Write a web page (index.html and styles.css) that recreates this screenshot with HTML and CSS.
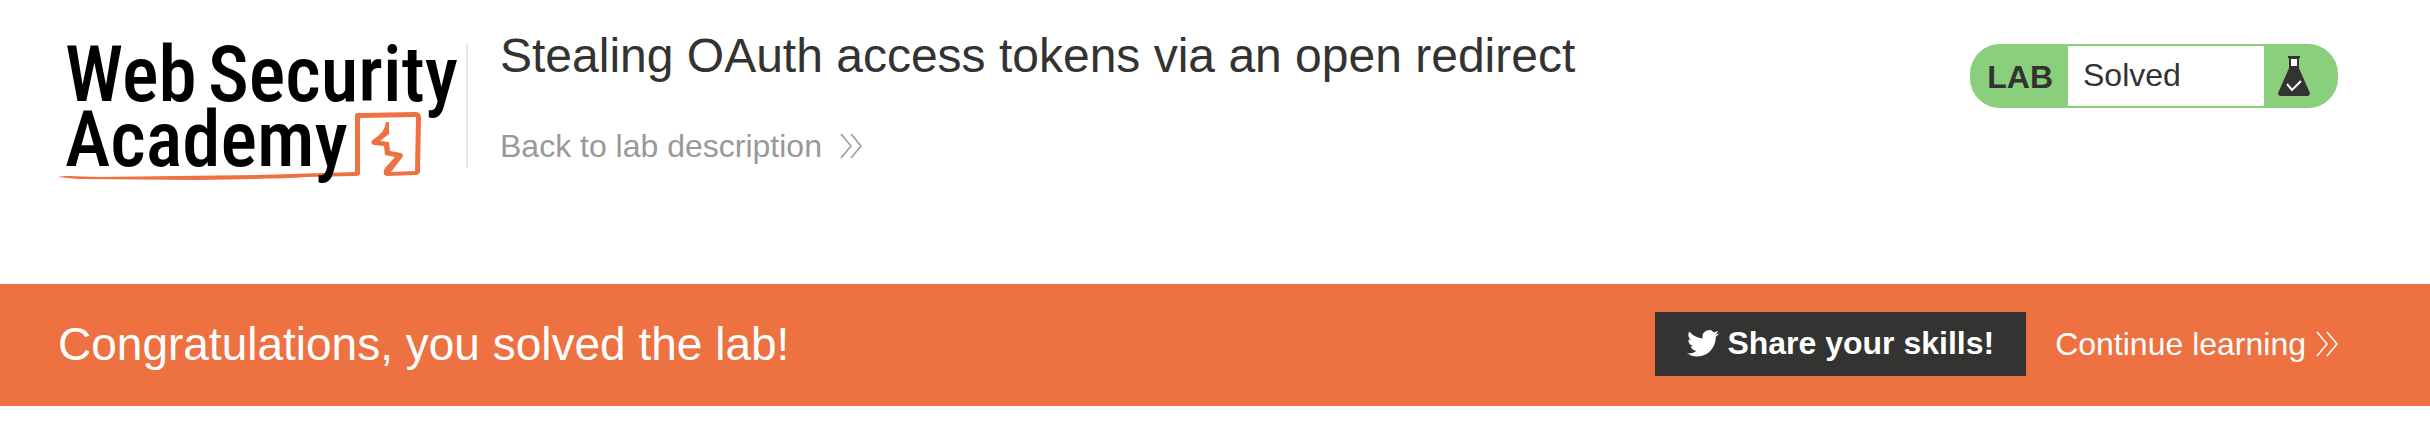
FILE: index.html
```
<!DOCTYPE html>
<html lang="en">
<head>
<meta charset="utf-8">
<title>Stealing OAuth access tokens via an open redirect</title>
<link rel="stylesheet" href="styles.css">
</head>
<body>
<header class="lab-header">
  <a class="logo" href="#" aria-label="Web Security Academy">
    <svg class="logo-art" viewBox="0 -12 400 156" aria-hidden="true">
      <path class="logo-line" transform="translate(0 21)" d="M0 116C10 114 20 116 40 116L200 114L297 111L297 55C297 52 299 51 303 52L357 51C361 51 363 53 363 57L362 110C362 113 360 114 357 114L330 115C325 115 325 111 327 107L337 96L327 94L326 85L316 84C312 83 313 80 316 78C323 73 327 69 328 61H331L331 73L322 80L331 81L332 90L343 92C346 93 345 96 343 98L333 111L357 110L358 56L302 57L302 112C302 115 299 115 296 115L250 116C220 118 180 118 140 119L20 118Z"/>
      <text class="logo-word" x="7" y="61">Web</text>
      <text class="logo-word" x="150" y="61">Security</text>
      <text class="logo-word" x="7" y="126">Academy</text>
    </svg>
  </a>
  <div class="title-rule"></div>
  <div class="title-block">
    <h1 class="title">Stealing OAuth access tokens via an open redirect</h1>
    <a class="back-link" href="#">Back to lab description
      <svg class="chevrons" viewBox="0 0 22 26" aria-hidden="true"><path d="M1 1L11 13L1 25M11 1L21 13L11 25"/></svg>
    </a>
  </div>
  <div class="lab-status">
    <span class="lab-tag">LAB</span>
    <span class="lab-state">Solved</span>
    <svg class="flask" viewBox="0 0 32 40" aria-hidden="true">
      <path class="flask-neck" d="M10 1H22M12 2V11H20V2Z"/>
      <path class="flask-body" d="M12 10H20L31.500 36C32.500 38 31.500 40 29 40H3C.5 40-.5 38 .5 36Z"/>
      <path class="flask-tick" d="M9 28L14 34L23 25"/>
    </svg>
  </div>
</header>
<section class="banner">
  <h2 class="banner-text">Congratulations, you solved the lab!</h2>
  <button class="share" type="button">
    <svg class="bird" viewBox="0 0 24 20" aria-hidden="true"><path d="M24 2.400a10 10 0 0 1-2.800.8A4.900 4.900 0 0 0 23.300.5a10 10 0 0 1-3.100 1.200A4.900 4.900 0 0 0 11.800 6.200 14 14 0 0 1 1.700 1a4.900 4.900 0 0 0 1.500 6.600A4.900 4.900 0 0 1 1 7v.1a4.900 4.900 0 0 0 3.900 4.800 5 5 0 0 1-2.200.1 4.900 4.900 0 0 0 4.600 3.400A9.900 9.900 0 0 1 0 17.500 14 14 0 0 0 7.500 19.700c9.100 0 14.300-7.700 14-14.600A10 10 0 0 0 24 2.400Z"/></svg>
    Share your skills!
  </button>
  <a class="continue" href="#">Continue learning
    <svg class="chevrons" viewBox="0 0 22 26" aria-hidden="true"><path d="M1 1L11 13L1 25M11 1L21 13L11 25"/></svg>
  </a>
</section>
</body>
</html>
```
FILE: styles.css
```
* { box-sizing: border-box; }

body {
  margin: 0;
  background: #fff;
  color: #333332;
  font-family: "Liberation Sans", Arial, sans-serif;
  font-size: 32px;
  line-height: 40px;
}

.lab-header {
  display: flex;
  align-items: flex-start;
  padding: 28px 92px 100px 58px;
}

.logo {
  flex: none;
  width: 400px;
}

.logo-art { display: block; width: 100%; overflow: visible; }
.logo-line { fill: #ee7142; }
.logo-word {
  font-family: "Roboto Condensed", Roboto, sans-serif;
  font-size: 77px;
  font-weight: 500;
  fill: #000;
}

.title-rule {
  flex: none;
  width: 2px;
  height: 124px;
  margin: 16px 32px 0 8px;
  background: #e5e5e5;
}

.title-block {
  flex: 1;
  display: flex;
  flex-direction: column;
  align-items: flex-start;
  gap: 42px;
}

.title {
  margin: 0;
  font-size: 48px;
  line-height: 56px;
  font-weight: 400;
}

.back-link {
  display: flex;
  align-items: center;
  gap: 18px;
  color: #999;
  text-decoration: none;
}

.chevrons {
  flex: none;
  width: 22px;
  height: 26px;
  fill: none;
  stroke: currentColor;
  stroke-width: 1.5;
}

.lab-status {
  flex: none;
  display: flex;
  align-items: center;
  margin-top: 16px;
  border: 2px solid #8acf7b;
  border-radius: 30px;
  background: #8acf7b;
}

.lab-tag {
  padding: 2px 15px 0 15px;
  font-weight: 700;
}

.lab-state {
  width: 196px;
  padding: 9px 15px 11px;
  background: #fff;
}

.flask {
  width: 32px;
  height: 40px;
  margin: 0 26px 0 14px;
}

.flask-neck { fill: #fff; stroke: #333332; stroke-width: 2; }
.flask-body { fill: #333332; }
.flask-tick { fill: none; stroke: #fff; stroke-width: 2; }

.banner {
  display: flex;
  align-items: center;
  padding: 28px 92px 30px 58px;
  background: #ee7142;
  color: #fff;
}

.banner-text {
  flex: 1;
  margin: 0;
  font-size: 46px;
  line-height: 56px;
  font-weight: 400;
}

.share {
  display: flex;
  align-items: center;
  gap: 8px;
  padding: 11px 32px 13px;
  border: 0;
  background: #333332;
  color: #fff;
  font: inherit;
  font-weight: 700;
}

.bird { width: 32px; height: 27px; fill: #fff; }

.continue {
  display: flex;
  align-items: center;
  gap: 10px;
  margin-left: 29px;
  color: #fff;
  text-decoration: none;
}
```
